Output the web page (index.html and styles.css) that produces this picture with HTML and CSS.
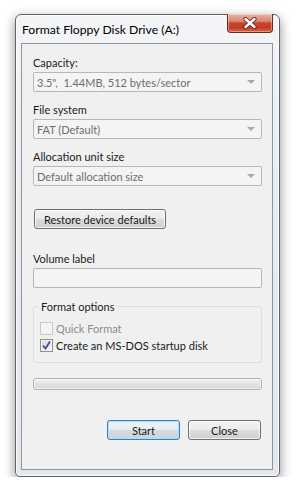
FILE: index.html
```html
<!DOCTYPE html>
<html lang="en">
  <head>
    <title>Format Floppy Disk Drive (A:)</title>
    <meta charset="utf-8">
    <link rel="stylesheet" href="styles.css">
  </head>
  <body>

  <div class="window">
    <div class="titlebar">
      <span class="title">Format Floppy Disk Drive (A:)</span>
      <span class="close-x">
        <svg width="16" height="12" viewBox="0 0 16 12">
          <path d="M3.5 2 L12.5 10 M12.5 2 L3.5 10" stroke="#5a2a22" stroke-width="4.2" stroke-linecap="round" fill="none"/>
          <path d="M3.5 2 L12.5 10 M12.5 2 L3.5 10" stroke="#ffffff" stroke-width="2.4" stroke-linecap="round" fill="none"/>
        </svg>
      </span>
    </div>

    <div class="client">
      <div class="field-label">Capacity:</div>
      <div class="combo"><span class="combo-text">3.5",&nbsp; 1.44MB, 512 bytes/sector</span><span class="arrow"></span></div>

      <div class="field-label">File system</div>
      <div class="combo"><span class="combo-text">FAT (Default)</span><span class="arrow"></span></div>

      <div class="field-label">Allocation unit size</div>
      <div class="combo"><span class="combo-text">Default allocation size</span><span class="arrow"></span></div>

      <div class="btn restore">Restore device defaults</div>

      <div class="field-label volume">Volume label</div>
      <div class="textbox"></div>

      <div class="group">
        <span class="legend">Format options</span>
        <div class="check disabled"><span class="box"></span>Quick Format</div>
        <div class="check"><span class="box checked">
          <svg width="11" height="11" viewBox="0 0 11 11">
            <path d="M2 5.5 L4.5 8.5 L9 1.5" stroke="#3d4f8a" stroke-width="1.8" fill="none"/>
          </svg>
        </span>Create an MS-DOS startup disk</div>
      </div>

      <div class="progress"></div>

      <div class="actions">
        <div class="btn default">Start</div>
        <div class="btn">Close</div>
      </div>
    </div>
  </div>

  </body>
</html>
```

FILE: styles.css
```css
html {
  height: 100%;
}
body {
  margin: 0;
  padding: 0;
  background: #ffffff;
  color: #1a1a1a;
  font-family: Lato, "Liberation Sans", sans-serif;
  font-size: 11px;
  line-height: 15px;
}

.window {
  box-sizing: border-box;
  width: 265px;
  height: 463px;
  margin: 14px 0 0 15px;
  border: 1px solid #5d646b;
  border-radius: 6px 6px 5px 5px;
  background: linear-gradient(#f3f5f7, #e9edf1 40%, #e4e8ec);
  box-shadow: 0 4px 12px rgba(0,0,0,0.45), inset 0 0 0 1px rgba(255,255,255,0.8);
  display: flex;
  flex-direction: column;
}

.titlebar {
  height: 28px;
  display: flex;
  align-items: flex-start;
}

.title {
  padding: 7px 0 0 6px;
  font-size: 12.2px;
  color: #000000;
  white-space: nowrap;
}

.close-x {
  box-sizing: border-box;
  width: 46px;
  height: 19px;
  margin: -1px 6px 0 auto;
  border: 1px solid #6b2a20;
  border-top: none;
  border-radius: 0 0 4px 4px;
  background: linear-gradient(#eab3a4, #d98671 40%, #c7472c 50%, #c33c20 75%, #d7664c);
  box-shadow: inset 0 0 0 1px rgba(255,255,255,0.35);
  display: flex;
  align-items: center;
  justify-content: center;
}

.client {
  box-sizing: border-box;
  height: 427px;
  margin: 0 6px 0 5px;
  border: 1px solid #8e969d;
  background: #f0f0f0;
  padding: 11px 10px 0 11px;
  display: flex;
  flex-direction: column;
}

.field-label {
  height: 15px;
  margin-bottom: 2px;
  white-space: nowrap;
}

.field-label.volume {
  margin-top: 22px;
}

.combo {
  box-sizing: border-box;
  height: 20px;
  margin-bottom: 10px;
  border: 1px solid #b4b8bc;
  border-radius: 2px;
  background: #f4f4f4;
  color: #6d6d6d;
  display: flex;
  align-items: center;
  padding: 0 0 0 3px;
  white-space: nowrap;
}

.combo-text {
  flex: 1;
}

.arrow {
  width: 0;
  height: 0;
  margin-right: 6px;
  border-left: 4px solid transparent;
  border-right: 4px solid transparent;
  border-top: 4px solid #a9a9a9;
}

.btn {
  box-sizing: border-box;
  height: 20px;
  border: 1px solid #707070;
  border-radius: 3px;
  background: linear-gradient(#f2f2f2, #ebebeb 50%, #dddddd 50%, #cfcfcf);
  box-shadow: inset 0 0 0 1px rgba(255,255,255,0.7);
  display: flex;
  align-items: center;
  justify-content: center;
  white-space: nowrap;
}

.btn.restore {
  width: 132px;
  margin: 13px 0 0 1px;
}

.btn.default {
  border-color: #3c7fb1;
  box-shadow: inset 0 0 0 1px #a7e1fb;
  background: linear-gradient(#f1f4f6, #e7ecf0 50%, #d6dde3 50%, #c9d3db);
}

.textbox {
  box-sizing: border-box;
  height: 20px;
  border: 1px solid #b4b8bc;
  border-radius: 2px;
  background: #f4f4f4;
}

.group {
  box-sizing: border-box;
  height: 57px;
  margin-top: 18px;
  border: 1px solid #d5dfe5;
  border-radius: 3px;
  padding: 0 0 0 6px;
  display: flex;
  flex-direction: column;
}

.legend {
  align-self: flex-start;
  margin: -8px 0 0 -2px;
  padding: 0 3px;
  background: #f0f0f0;
}

.check {
  height: 15px;
  margin-top: 7px;
  display: flex;
  align-items: center;
  gap: 3px;
  white-space: nowrap;
}

.check + .check {
  margin-top: 2px;
}

.check.disabled {
  color: #8d8d8d;
}

.box {
  box-sizing: border-box;
  width: 13px;
  height: 13px;
  border: 1px solid #8e8f8f;
  background: linear-gradient(135deg, #dcdcdc, #fbfbfb);
  box-shadow: inset 0 0 0 1px #f4f4f4;
  display: flex;
  align-items: center;
  justify-content: center;
}

.check.disabled .box {
  border-color: #c9c9c9;
  background: #f4f4f4;
  box-shadow: none;
}

.box.checked {
  background: linear-gradient(135deg, #cfd6e6, #f4f6fa);
}

.progress {
  box-sizing: border-box;
  height: 12px;
  margin-top: 15px;
  border: 1px solid #b2b2b2;
  border-radius: 3px;
  background: linear-gradient(#f3f3f3, #e2e2e2 50%, #d6d6d6);
  box-shadow: inset 0 0 0 1px rgba(255,255,255,0.6);
}

.actions {
  margin-top: 30px;
  padding-right: 1px;
  display: flex;
  justify-content: flex-end;
  gap: 8px;
}

.actions .btn {
  width: 73px;
}
```
